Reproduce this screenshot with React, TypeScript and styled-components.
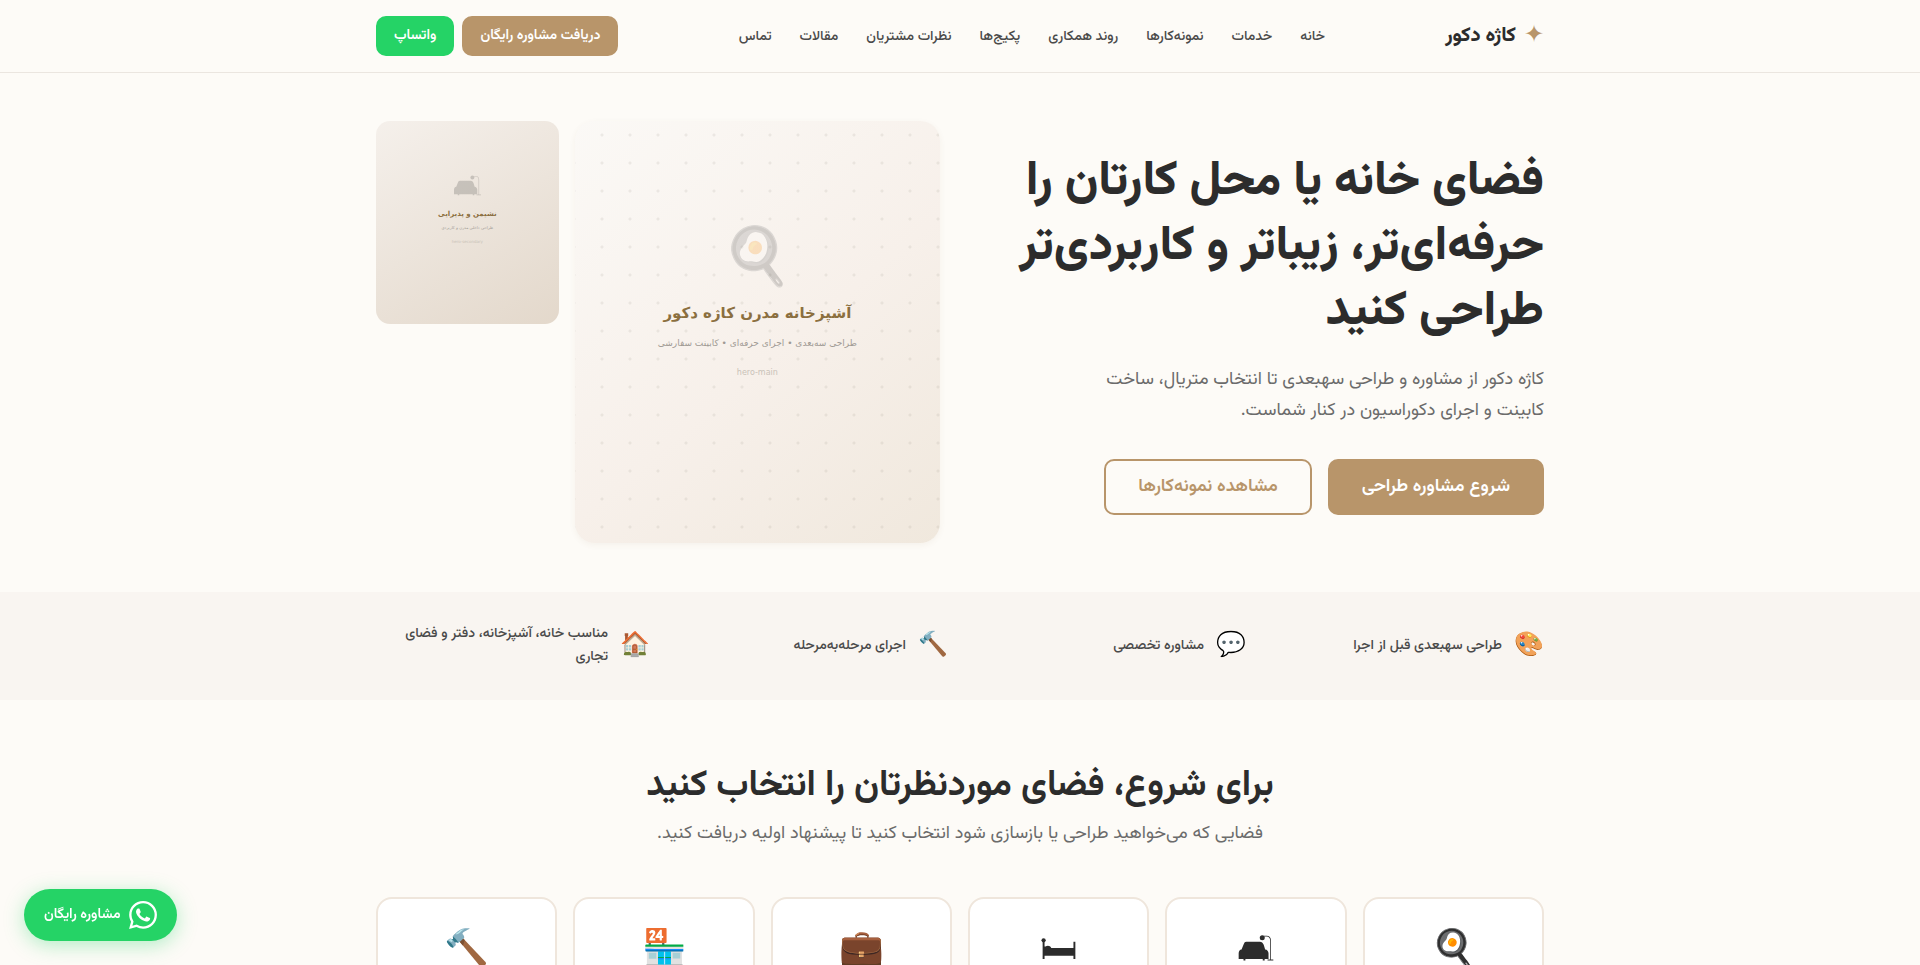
import React from 'react';
import styled, { createGlobalStyle, css } from 'styled-components';

const color = {
  page: '#fdfbf7',
  sand: '#f9f5f1',
  line: '#ebe6e0',
  card: '#efe6dc',
  ink: '#2c2c2c',
  body: '#4a4a4a',
  muted: '#6b6b6b',
  brand: '#b8956a',
  whatsapp: '#25d366',
};

const GlobalStyle = createGlobalStyle`
  *, *::before, *::after { box-sizing: border-box; }
  html { scrollbar-width: none; }
  body {
    margin: 0;
    background: ${color.page};
    color: ${color.ink};
    font-family: Vazirmatn, "Noto Sans Arabic", "DejaVu Sans", sans-serif;
    font-size: 16px;
    line-height: 26px;
  }
  h1, h2, p, ul { margin: 0; padding: 0; }
  a { color: inherit; text-decoration: none; }
`;

const Page = styled.div`
  min-height: 100vh;
  padding-bottom: 64px;
`;

const container = css`
  width: 100%;
  max-width: 1200px;
  margin: 0 auto;
  padding: 0 16px;
`;

const Header = styled.header`
  border-bottom: 1px solid ${color.line};
`;

const HeaderInner = styled.div`
  ${container}
  min-height: 72px;
  display: flex;
  align-items: center;
  justify-content: space-between;
`;

const Logo = styled.a`
  display: flex;
  align-items: center;
  gap: 8px;
  font-size: 20px;
  font-weight: 800;
`;

const LogoMark = styled.span`
  color: ${color.brand};
  font-size: 24px;
  font-weight: 400;
`;

const NavList = styled.ul`
  display: flex;
  gap: 28px;
  list-style: none;
  && { padding-top: 2px; }
`;

const NavLink = styled.a`
  color: ${color.body};
  font-size: 14px;
  font-weight: 500;
`;

const Actions = styled.div<{ $gap: number }>`
  display: flex;
  flex-wrap: wrap;
  gap: ${(p) => p.$gap}px;
`;

const Button = styled.a<{ $tone: 'brand' | 'whatsapp' | 'outline'; $large?: boolean }>`
  display: inline-flex;
  align-items: center;
  justify-content: center;
  border: 2px solid ${(p) => (p.$tone === 'whatsapp' ? color.whatsapp : color.brand)};
  border-radius: 10px;
  background: ${(p) => (p.$tone === 'outline' ? 'transparent' : p.$tone === 'whatsapp' ? color.whatsapp : color.brand)};
  color: ${(p) => (p.$tone === 'outline' ? color.brand : '#fff')};
  height: ${(p) => (p.$large ? 56 : 40)}px;
  padding: 0 ${(p) => (p.$large ? 32 : 16)}px;
  font-size: ${(p) => (p.$large ? 18 : 14)}px;
  font-weight: 600;
`;

const Hero = styled.section`
  ${container}
  display: grid;
  grid-template-columns: 1fr 1fr;
  align-items: center;
  gap: 40px;
  padding-top: 48px;
  padding-bottom: 49px;
`;

const Title = styled.h1`
  font-size: 48px;
  font-weight: 800;
  line-height: 65px;
`;

const Lead = styled.p`
  max-width: 480px;
  margin: 20px 0 32px;
  color: ${color.muted};
  font-size: 18px;
  line-height: 31px;
`;

const Gallery = styled.div`
  display: grid;
  grid-template-columns: 2fr 1fr;
  align-items: start;
  gap: 16px;
`;

const Picture = styled.figure<{ $small?: boolean }>`
  margin: 0;
  display: flex;
  flex-direction: column;
  align-items: center;
  font-family: "DejaVu Sans", sans-serif;
  color: #a09a94;
  ${(p) =>
    p.$small
      ? css`
          height: 203px;
          padding-top: 54px;
          border-radius: 14px;
          background: linear-gradient(150deg, #f5f0eb, #e3d8cb);
          line-height: 14px;
        `
      : css`
          height: 422px;
          padding-top: 99px;
          border-radius: 20px;
          background:
            radial-gradient(circle, rgba(130, 125, 110, 0.12) 1px, transparent 2px) 13px 0 / 28px 28px,
            linear-gradient(140deg, #fbf9f6, #f7f0ea 55%, #f0e8dd);
          box-shadow: 0 2px 6px rgba(120, 90, 50, 0.06);
          line-height: 30px;
        `}
`;

const PictureEmoji = styled.span`
  font-size: 56px;
  line-height: 72px;
  opacity: 0.2;
`;

const PictureTitle = styled.strong<{ $small?: boolean }>`
  margin-top: ${(p) => (p.$small ? 11 : 6)}px;
  color: #8b6f3f;
  font-size: ${(p) => (p.$small ? 7 : 15)}px;
`;

const PictureNote = styled.span<{ $size: number }>`
  font-size: ${(p) => p.$size}px;
`;

const PictureTag = styled(PictureNote)`
  color: #c9c2b8;
`;

const Strip = styled.section`
  background: ${color.sand};
`;

const Features = styled.ul`
  ${container}
  && { padding: 31px 16px; }
  display: grid;
  grid-template-columns: repeat(4, 1fr);
  gap: 24px;
  list-style: none;
`;

const Feature = styled.li`
  display: flex;
  align-items: center;
  gap: 12px;
  color: ${color.body};
  font-size: 14px;
  font-weight: 500;
  line-height: 23px;
`;

const FeatureIcon = styled.span`
  font-size: 24px;
`;

const Spaces = styled.section`
  ${container}
  padding-top: 57px;
  text-align: center;
`;

const SectionTitle = styled.h2`
  font-size: 36px;
  font-weight: 700;
  line-height: 58px;
`;

const SectionLead = styled.p`
  margin: 4px 0 47px;
  color: ${color.muted};
  font-size: 18px;
  line-height: 31px;
`;

const Cards = styled.div`
  display: grid;
  grid-template-columns: repeat(6, 1fr);
  gap: 16px;
`;

const Card = styled.button`
  display: flex;
  flex-direction: column;
  align-items: center;
  min-height: 160px;
  padding: 28px 16px;
  border: 2px solid ${color.card};
  border-radius: 16px;
  background: #fff;
  color: ${color.ink};
  font: inherit;
`;

const CardEmoji = styled.span`
  font-size: 36px;
  line-height: 48px;
`;

const Drawing = styled.svg<{ $faded?: boolean }>`
  display: block;
  fill: currentColor;
  opacity: ${(p) => (p.$faded ? 0.2 : 1)};
  color: ${color.ink};
  margin-top: ${(p) => (p.$faded ? 0 : 8)}px;
`;

const Floating = styled.a`
  position: fixed;
  left: 24px;
  bottom: 24px;
  display: flex;
  align-items: center;
  gap: 8px;
  height: 52px;
  padding: 0 20px;
  border-radius: 26px;
  background: ${color.whatsapp};
  box-shadow: 0 4px 20px rgba(37, 211, 102, 0.35);
  color: #fff;
  font-size: 14px;
  font-weight: 600;
`;

function Sofa({ width, height, faded }: { width: number; height: number; faded?: boolean }) {
  return (
    <Drawing $faded={faded} width={width} height={height} viewBox="0 0 36 27" aria-hidden="true">
      <path d="M8 7h14c2 0 3 1 4 3l1.500 5c2 0 3.500 2 3.500 4v6h-4v1.500h-2V25H7v1.500H5V25H0v-6c0-2 1-4 3-4l2-5c1-2 1-3 3-3z" />
      <circle cx="24.500" cy="2.800" r="2.600" />
      <path d="M26 .8h3c3 0 4.500 2 4.500 5v19.700H36v1h-6v-1h2.700V6c0-2.600-1-4.400-3.700-4.400h-3z" />
    </Drawing>
  );
}

function Bed() {
  return (
    <Drawing width={36} height={26} viewBox="0 0 36 27" aria-hidden="true">
      <path d="M1 6h2v6h1c2-1.500 5-1 6 1.500h23V7h2v18h-2v-3.500H3V25H1z" />
      <circle cx="2" cy="5.500" r="2.200" />
    </Drawing>
  );
}

function WhatsAppIcon() {
  return (
    <svg width="28" height="28" viewBox="0 0 24 24" fill="#fff" aria-hidden="true">
      <path d="M17.472 14.382c-.297-.149-1.758-.867-2.030-.967-.273-.099-.471-.148-.670.150-.197.297-.767.966-.940 1.164-.173.199-.347.223-.644.075-.297-.150-1.255-.463-2.390-1.475-.883-.788-1.480-1.761-1.653-2.059-.173-.297-.018-.458.130-.606.134-.133.298-.347.446-.520.149-.174.198-.298.298-.497.099-.198.050-.371-.025-.520-.075-.149-.669-1.612-.916-2.207-.242-.579-.487-.500-.669-.510-.173-.008-.371-.010-.570-.010-.198 0-.520.074-.792.372-.272.297-1.040 1.016-1.040 2.479 0 1.462 1.065 2.875 1.213 3.074.149.198 2.096 3.200 5.077 4.487.709.306 1.262.489 1.694.625.712.227 1.360.195 1.871.118.571-.085 1.758-.719 2.006-1.413.248-.694.248-1.289.173-1.413-.074-.124-.272-.198-.570-.347m-5.421 7.403h-.004a9.870 9.870 0 01-5.031-1.378l-.361-.214-3.741.982.998-3.648-.235-.374a9.860 9.860 0 01-1.510-5.260c.001-5.450 4.436-9.884 9.888-9.884 2.640 0 5.122 1.030 6.988 2.898a9.825 9.825 0 012.893 6.994c-.003 5.450-4.437 9.884-9.885 9.884m8.413-18.297A11.815 11.815 0 0012.050 0C5.495 0 .160 5.335.157 11.892c0 2.096.547 4.142 1.588 5.945L.057 24l6.305-1.654a11.882 11.882 0 005.683 1.448h.005c6.554 0 11.890-5.335 11.893-11.893a11.821 11.821 0 00-3.480-8.413z" />
    </svg>
  );
}

const navItems = ['خانه', 'خدمات', 'نمونه‌کارها', 'روند همکاری', 'پکیج‌ها', 'نظرات مشتریان', 'مقالات', 'تماس'];

const features = [
  { icon: '🎨', text: 'طراحی سهبعدی قبل از اجرا' },
  { icon: '💬', text: 'مشاوره تخصصی' },
  { icon: '🔨', text: 'اجرای مرحله‌به‌مرحله' },
  { icon: '🏠', text: 'مناسب خانه، آشپزخانه، دفتر و فضای تجاری' },
];

const spaces = [
  { label: 'آشپزخانه', icon: <CardEmoji>🍳</CardEmoji> },
  { label: 'نشیمن و پذیرایی', icon: <Sofa width={36} height={26} /> },
  { label: 'اتاق خواب', icon: <Bed /> },
  { label: 'دفتر کار', icon: <CardEmoji>💼</CardEmoji> },
  { label: 'فضای تجاری', icon: <CardEmoji>🏪</CardEmoji> },
  { label: 'بازسازی', icon: <CardEmoji>🔨</CardEmoji> },
];

export default function App() {
  return (
    <Page dir="rtl" lang="fa">
      <GlobalStyle />
      <Header>
        <HeaderInner>
          <Logo href="#home">
            <LogoMark>✦</LogoMark>
            کاژه دکور
          </Logo>
          <nav>
            <NavList>
              {navItems.map((item) => (
                <li key={item}>
                  <NavLink href="#section">{item}</NavLink>
                </li>
              ))}
            </NavList>
          </nav>
          <Actions $gap={8}>
            <Button href="#consult" $tone="brand">دریافت مشاوره رایگان</Button>
            <Button href="#whatsapp" $tone="whatsapp">واتساپ</Button>
          </Actions>
        </HeaderInner>
      </Header>

      <main>
        <Hero>
          <div>
            <Title>فضای خانه یا محل کارتان را حرفه‌ای‌تر، زیباتر و کاربردی‌تر طراحی کنید</Title>
            <Lead>کاژه دکور از مشاوره و طراحی سهبعدی تا انتخاب متریال، ساخت کابینت و اجرای دکوراسیون در کنار شماست.</Lead>
            <Actions $gap={16}>
              <Button href="#consult" $tone="brand" $large>شروع مشاوره طراحی</Button>
              <Button href="#portfolio" $tone="outline" $large>مشاهده نمونه‌کارها</Button>
            </Actions>
          </div>
          <Gallery>
            <Picture>
              <PictureEmoji>🍳</PictureEmoji>
              <PictureTitle>آشپزخانه مدرن کاژه دکور</PictureTitle>
              <PictureNote $size={9}>طراحی سه‌بعدی • اجرای حرفه‌ای • کابینت سفارشی</PictureNote>
              <PictureTag $size={8}>hero-main</PictureTag>
            </Picture>
            <Picture $small>
              <Sofa width={27} height={21} faded />
              <PictureTitle $small>نشیمن و پذیرایی</PictureTitle>
              <PictureNote $size={4}>طراحی داخلی مدرن و کاربردی</PictureNote>
              <PictureTag $size={4}>hero-secondary</PictureTag>
            </Picture>
          </Gallery>
        </Hero>

        <Strip>
          <Features>
            {features.map((f) => (
              <Feature key={f.text}>
                <FeatureIcon>{f.icon}</FeatureIcon>
                <span>{f.text}</span>
              </Feature>
            ))}
          </Features>
        </Strip>

        <Spaces>
          <SectionTitle>برای شروع، فضای موردنظرتان را انتخاب کنید</SectionTitle>
          <SectionLead>فضایی که می‌خواهید طراحی یا بازسازی شود انتخاب کنید تا پیشنهاد اولیه دریافت کنید.</SectionLead>
          <Cards>
            {spaces.map((s) => (
              <Card key={s.label} type="button" aria-label={s.label}>
                {s.icon}
              </Card>
            ))}
          </Cards>
        </Spaces>
      </main>

      <Floating href="#whatsapp">
        <WhatsAppIcon />
        مشاوره رایگان
      </Floating>
    </Page>
  );
}
